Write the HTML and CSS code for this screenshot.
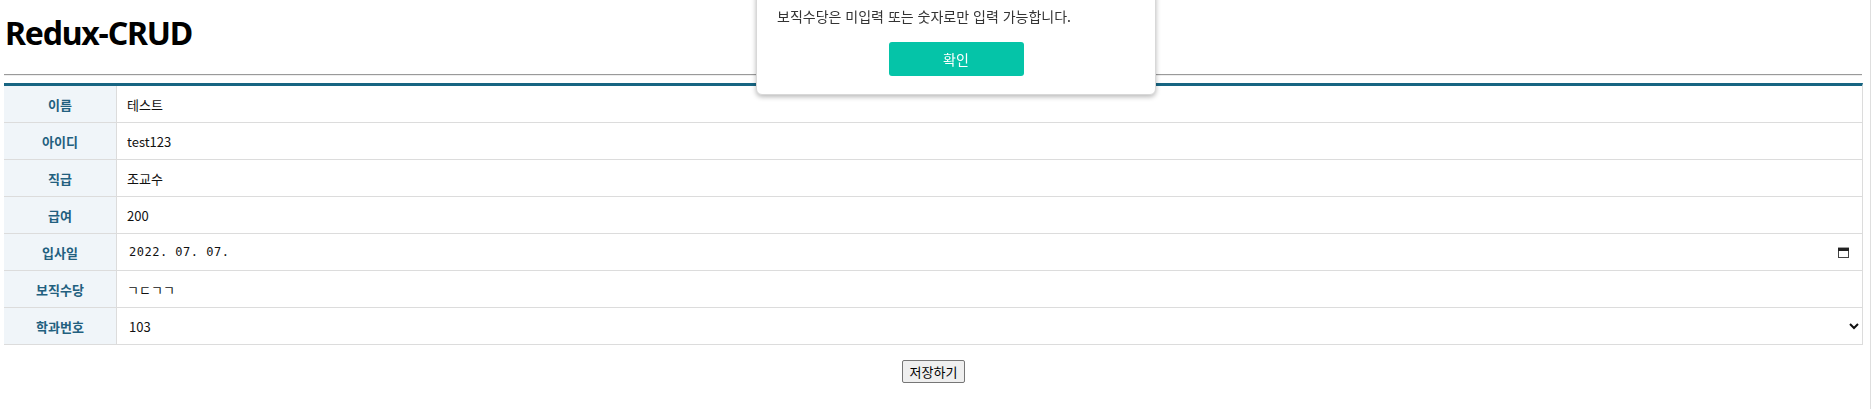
FILE: index.html
```html
<!DOCTYPE html>
<html lang="ko">
<head>
<meta charset="utf-8">
<title>Redux-CRUD</title>
<link rel="stylesheet" href="styles.css">
</head>
<body>
<div class="page">
  <h1 class="title">Redux-CRUD</h1>
  <hr class="rule">
  <div class="form">
    <div class="row"><div class="label">이름</div><div class="value"><input class="field" type="text" value="테스트"></div></div>
    <div class="row"><div class="label">아이디</div><div class="value"><input class="field" type="text" value="test123"></div></div>
    <div class="row"><div class="label">직급</div><div class="value"><input class="field" type="text" value="조교수"></div></div>
    <div class="row"><div class="label">급여</div><div class="value"><input class="field" type="text" value="200"></div></div>
    <div class="row"><div class="label">입사일</div><div class="value"><input class="field date" type="text" value="2022. 07. 07."><svg class="cal" width="11" height="11" viewBox="0 0 11 11"><rect x="0.5" y="1" width="10" height="9.5" fill="none" stroke="#444" stroke-width="1"/><rect x="0" y="1" width="11" height="3" fill="#222"/></svg></div></div>
    <div class="row"><div class="label">보직수당</div><div class="value"><input class="field jamo" type="text" value="ㄱㄷㄱㄱ"></div></div>
    <div class="row"><div class="label">학과번호</div><div class="value"><select class="pick"><option>103</option></select></div></div>
  </div>
  <div class="actions"><button class="save" type="button">저장하기</button></div>
</div>
<div class="dialog">
  <p class="msg">보직수당은 미입력 또는 숫자로만 입력 가능합니다.</p>
  <div class="dialog-actions"><button class="ok" type="button">확인</button></div>
</div>
<div class="edge"></div>
</body>
</html>
```
FILE: styles.css
```css
html, body {
  margin: 0;
  padding: 0;
  background: #fff;
}
body {
  font-family: "Noto Sans CJK KR", "Noto Sans", sans-serif;
  font-size: 13px;
  color: #222;
}
.page {
  width: 1859px;
  margin-left: 4px;
}
.title {
  margin: 13px 0 0 1px;
  font-family: "Noto Sans", "Noto Sans CJK KR", sans-serif;
  font-size: 32px;
  line-height: 40px;
  font-weight: 700;
  letter-spacing: -1.2px;
  color: #000;
}
.rule {
  margin: 21px 0 0 0;
  border: 0;
  border-top: 1px solid #9a9a9a;
  border-bottom: 1px solid #eeeeee;
  height: 0;
  width: 1858px;
}
.form {
  margin-top: 7px;
  border-top: 3px solid #176582;
  border-right: 1px solid #dcdcdc;
  width: 1858px;
}
.row {
  display: grid;
  grid-template-columns: 113px 1fr;
  height: 36px;
  border-bottom: 1px solid #dcdcdc;
}
.label {
  background: #f0f5f9;
  border-right: 1px solid #dcdcdc;
  display: flex;
  align-items: center;
  justify-content: center;
  color: #22607f;
  font-weight: 700;
  font-size: 13px;
}
.value {
  display: flex;
  align-items: center;
  background: #fff;
}
.field {
  flex: 1;
  border: 0;
  outline: none;
  background: transparent;
  font-family: "Noto Sans CJK KR", "Noto Sans", sans-serif;
  font-size: 13px;
  color: #111;
  padding: 0 0 0 10px;
  height: 30px;
}
.date {
  padding-left: 12px;
  font-family: "DejaVu Sans Mono", "Noto Sans CJK KR", monospace;
  font-size: 12px;
  letter-spacing: 0.5px;
}
.cal {
  margin-right: 13px;
  flex: none;
}
.pick {
  width: 100%;
  height: 30px;
  border: 0;
  outline: none;
  background: #fff;
  font-family: "Noto Sans CJK KR", "Noto Sans", sans-serif;
  font-size: 13px;
  color: #111;
  padding-left: 8px;
}
.actions {
  display: flex;
  justify-content: center;
  margin-top: 15px;
}
.save {
  height: 23px;
  padding: 0 7px;
  border: 1px solid #767676;
  border-radius: 2px;
  background: #efefef;
  font-family: "Noto Sans CJK KR", "Noto Sans", sans-serif;
  font-size: 13px;
  color: #000;
  line-height: 20px;
}
.dialog {
  position: fixed;
  top: -10px;
  left: 756px;
  width: 400px;
  height: 105px;
  box-sizing: border-box;
  padding: 15px 20px 0 20px;
  background: #fff;
  border-radius: 6px;
  border: 1px solid #d8d8d8;
  box-shadow: 0 2px 5px rgba(0, 0, 0, 0.28);
}
.msg {
  margin: 0;
  line-height: 20px;
  font-size: 14px;
  color: #333;
}
.dialog-actions {
  display: flex;
  justify-content: center;
  margin-top: 16px;
}
.ok {
  width: 135px;
  height: 34px;
  border: 0;
  border-radius: 3px;
  background: #05c4a8;
  color: #fff;
  font-family: "Noto Sans CJK KR", "Noto Sans", sans-serif;
  font-size: 14px;
}
.edge {
  position: fixed;
  top: 0;
  bottom: 0;
  right: 2px;
  width: 1px;
  background: #dedede;
}
```
